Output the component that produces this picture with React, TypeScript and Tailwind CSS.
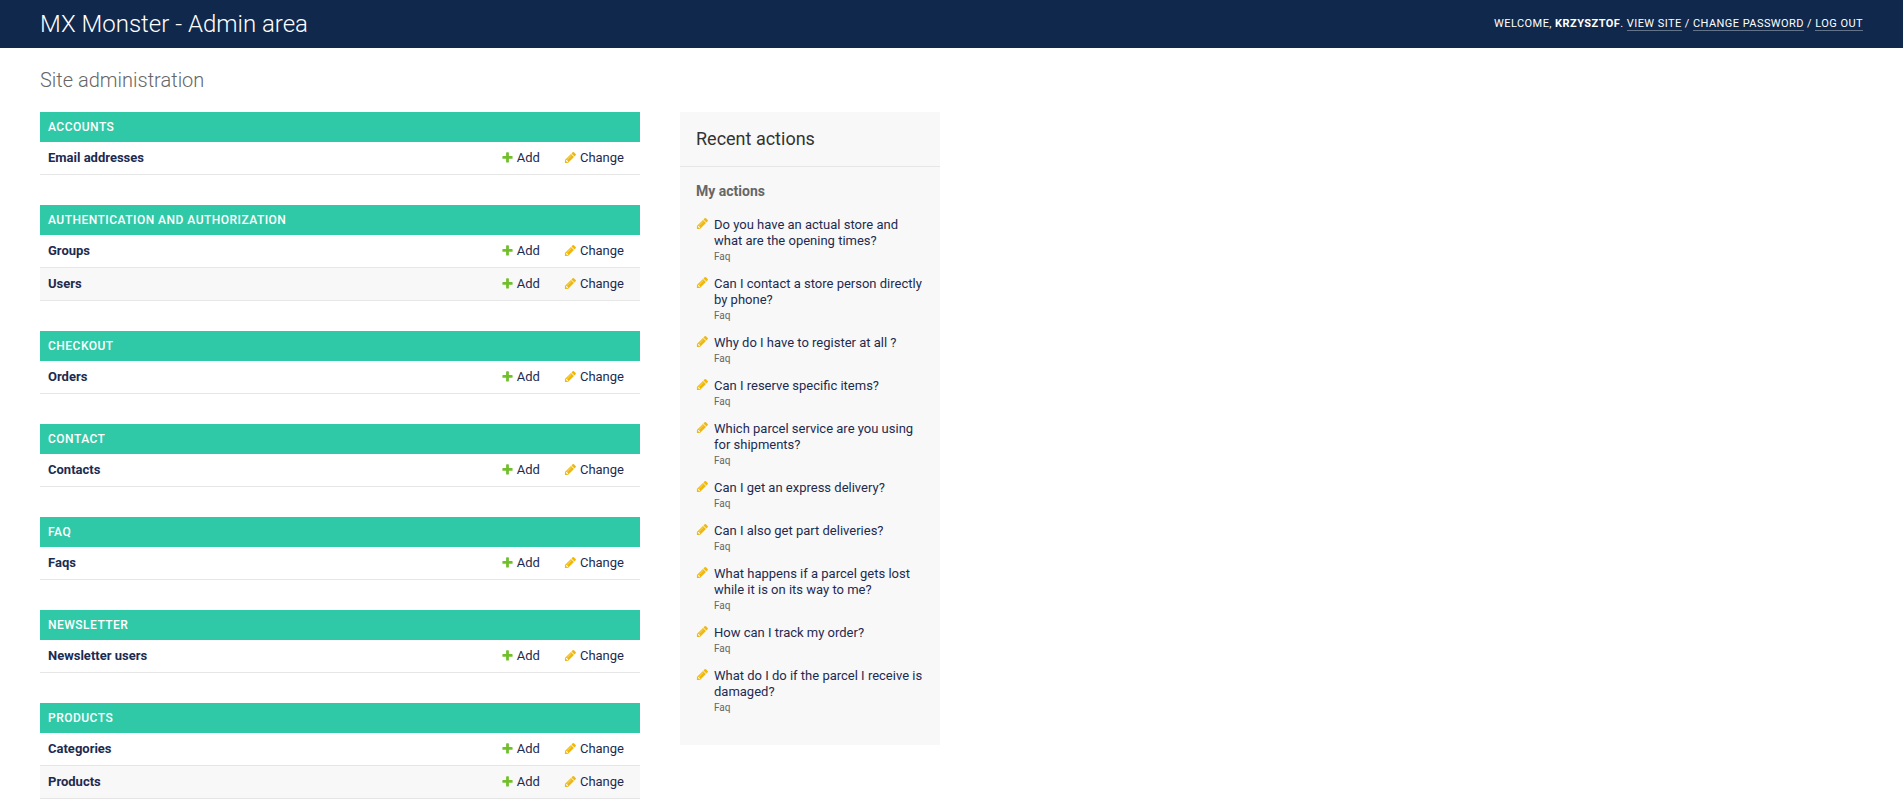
import type { ReactNode } from "react";

const apps = [
  { name: "Accounts", models: ["Email addresses"] },
  { name: "Authentication and Authorization", models: ["Groups", "Users"] },
  { name: "Checkout", models: ["Orders"] },
  { name: "Contact", models: ["Contacts"] },
  { name: "Faq", models: ["Faqs"] },
  { name: "Newsletter", models: ["Newsletter users"] },
  { name: "Products", models: ["Categories", "Products"] },
];

const actions = [
  "Do you have an actual store and what are the opening times?",
  "Can I contact a store person directly by phone?",
  "Why do I have to register at all ?",
  "Can I reserve specific items?",
  "Which parcel service are you using for shipments?",
  "Can I get an express delivery?",
  "Can I also get part deliveries?",
  "What happens if a parcel gets lost while it is on its way to me?",
  "How can I track my order?",
  "What do I do if the parcel I receive is damaged?",
];

function AddIcon() {
  return (
    <svg className="size-[13px] shrink-0" viewBox="0 0 1792 1792" aria-hidden="true">
      <path
        fill="#70bf2b"
        d="M1600 796v192q0 40-28 68t-68 28h-416v416q0 40-28 68t-68 28h-192q-40 0-68-28t-28-68v-416h-416q-40 0-68-28t-28-68v-192q0-40 28-68t68-28h416v-416q0-40 28-68t68-28h192q40 0 68 28t28 68v416h416q40 0 68 28t28 68z"
      />
    </svg>
  );
}

function ChangeIcon() {
  return (
    <svg className="size-[13px] shrink-0" viewBox="0 0 1792 1792" aria-hidden="true">
      <path
        fill="#efb80b"
        d="M491 1536l91-91-235-235-91 91v107h128v128h107zm523-928q0-22-22-22-10 0-17 7l-542 542q-7 7-7 17 0 22 22 22 10 0 17-7l542-542q7-7 7-17zm-54-192l416 416-832 832h-416v-416zm683 96q0 53-37 90l-166 166-416-416 166-165q36-38 90-38 53 0 91 38l235 234q37 39 37 91z"
      />
    </svg>
  );
}

function ToolLink({ children }: { children: ReactNode }) {
  return (
    <a href="#" className="border-b border-white/35">
      {children}
    </a>
  );
}

function RowLink({ icon, children }: { icon: ReactNode; children: ReactNode }) {
  return (
    <a href="#" className="flex items-start gap-[3px]">
      <span className="pt-px">{icon}</span>
      {children}
    </a>
  );
}

function AppModule({ name, models }: { name: string; models: string[] }) {
  return (
    <table className="w-full border-separate border-spacing-0 text-left">
      <caption className="bg-[#30c9a8] p-2 text-left text-xs leading-[14px] font-medium tracking-[0.04em] text-white uppercase">
        <a href="#">{name}</a>
      </caption>
      <tbody>
        {models.map((model) => (
          <tr key={model} className="leading-4 even:bg-[#f8f8f8]">
            <th scope="row" className="border-b border-[#e6e6e6] p-2 font-bold">
              <a href="#">{model}</a>
            </th>
            <td className="w-[62px] border-b border-[#e6e6e6] py-2 pr-4 pl-2">
              <RowLink icon={<AddIcon />}>Add</RowLink>
            </td>
            <td className="w-[84px] border-b border-[#e6e6e6] py-2 pr-4 pl-2">
              <RowLink icon={<ChangeIcon />}>Change</RowLink>
            </td>
          </tr>
        ))}
      </tbody>
    </table>
  );
}

export default function App() {
  return (
    <div className="min-h-screen bg-white font-['Roboto',sans-serif] text-[13px] text-[#1d2b50]">
      <header className="flex h-12 items-center justify-between bg-[#10284c] px-10 text-white">
        <h1 className="text-2xl font-light">
          <a href="#">MX Monster - Admin area</a>
        </h1>
        <div className="text-[11px] leading-[14px] tracking-[0.04em] uppercase">
          Welcome, <strong className="font-bold">Krzysztof</strong>. <ToolLink>View site</ToolLink> /{" "}
          <ToolLink>Change password</ToolLink> / <ToolLink>Log out</ToolLink>
        </div>
      </header>
      <main className="px-10 pt-5">
        <h2 className="mb-5 text-xl leading-6 font-light text-[#666]">Site administration</h2>
        <div className="flex items-start gap-10">
          <div className="flex w-full max-w-[600px] flex-col gap-[30px]">
            {apps.map((app) => (
              <AppModule key={app.name} name={app.name} models={app.models} />
            ))}
          </div>
          <aside className="w-[260px] shrink-0 bg-[#f8f8f8] pb-[18px]">
            <h2 className="border-b border-[#e6e6e6] p-4 text-lg leading-[22px] font-normal text-[#333]">
              Recent actions
            </h2>
            <h3 className="mt-4 mb-[18px] px-4 text-sm leading-4 font-bold text-[#666]">My actions</h3>
            <ul className="px-4 leading-4">
              {actions.map((action) => (
                <li key={action} className="flex items-start gap-[5px] pb-3">
                  <ChangeIcon />
                  <div>
                    <a href="#" className="block">
                      {action}
                    </a>
                    <span className="block text-[10px] leading-[15px] text-[#666]">Faq</span>
                  </div>
                </li>
              ))}
            </ul>
          </aside>
        </div>
      </main>
    </div>
  );
}
